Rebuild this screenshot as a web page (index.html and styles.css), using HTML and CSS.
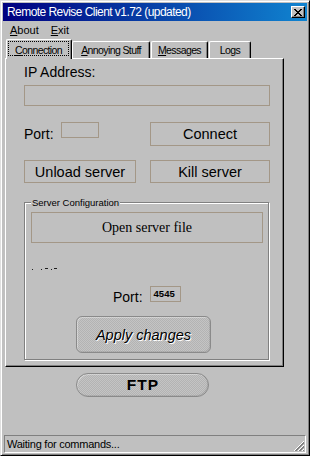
FILE: index.html
```html
<!DOCTYPE html>
<html lang="en">

<head>
    <meta charset="UTF-8">
    <title>Remote Revise Client v1.72 (updated)</title>
    <link rel="stylesheet" href="styles.css">
</head>

<body>
    <div class="window">
        <div class="titlebar">
            <span class="title">Remote Revise Client v1.72 (updated)</span>
            <button class="close-btn">
                <svg width="8" height="7" viewBox="0 0 8 7" shape-rendering="crispEdges">
                    <path d="M0 0h2v1H0zM6 0h2v1H6zM1 1h2v1H1zM5 1h2v1H5zM2 2h4v1H2zM3 3h2v1H3zM2 4h4v1H2zM1 5h2v1H1zM5 5h2v1H5zM0 6h2v1H0zM6 6h2v1H6z" fill="#000" />
                </svg>
            </button>
        </div>

        <div class="menubar">
            <span><u>A</u>bout</span>
            <span><u>E</u>xit</span>
        </div>

        <div class="tabs">
            <div class="tab tab-active"><span class="focus"><u>C</u>onnection</span></div>
            <div class="tab tab-annoying"><u>A</u>nnoying Stuff</div>
            <div class="tab tab-messages"><u>M</u>essages</div>
            <div class="tab tab-logs">Logs</div>
        </div>

        <div class="panel">
            <div class="label">IP Address:</div>
            <div class="flat-box ip-input"></div>

            <div class="row row-port">
                <span class="label">Port:</span>
                <div class="flat-box port-input"></div>
                <button class="flat-btn btn-connect">Connect</button>
            </div>

            <div class="row row-server">
                <button class="flat-btn btn-unload">Unload server</button>
                <button class="flat-btn btn-kill">Kill server</button>
            </div>

            <div class="groupbox">
                <span class="legend">Server Configuration</span>
                <button class="flat-btn btn-open">Open server file</button>

                <!-- label clipped by the box above, only a few pixels show -->
                <div class="clipped">
                    <span class="m1"></span><span class="m2"></span><span class="m3"></span><span class="m4"></span><span class="m5"></span>
                </div>

                <div class="row row-cfg-port">
                    <span class="label">Port:</span>
                    <div class="flat-box cfg-port">4545</div>
                </div>

                <button class="dotted-btn btn-apply">Apply changes</button>
            </div>
        </div>

        <button class="dotted-btn btn-ftp">FTP</button>

        <div class="statusbar">
            <span>Waiting for commands...</span>
            <svg class="grip" width="12" height="12" viewBox="0 0 12 12" shape-rendering="crispEdges">
                <path d="M11 1L1 11M11 5L5 11M11 9L9 11" stroke="#fff" stroke-width="1" />
                <path d="M11 2L2 11M11 3L3 11M11 6L6 11M11 7L7 11M11 10L10 11" stroke="#808080" stroke-width="1" />
            </svg>
        </div>
    </div>
</body>

</html>
```

FILE: styles.css
```css
body {
    margin: 0;
    background: #c0c0c0;
    font-family: "Liberation Sans", Arial, sans-serif;
    color: #000;
}

button {
    font-family: inherit;
    color: #000;
    padding: 0;
    margin: 0;
}

.window {
    width: 310px;
    height: 456px;
    box-sizing: border-box;
    border: 1px solid;
    border-color: #dfdfdf #000 #000 #dfdfdf;
    box-shadow: inset 1px 1px #fff, inset -1px -1px #808080;
    padding: 2px;
    background: #c0c0c0;
    display: flex;
    flex-direction: column;
}

/* title bar */
.titlebar {
    height: 18px;
    display: flex;
    align-items: center;
    background: linear-gradient(to right, #000080, #1084d0);
    padding: 0 2px 0 4px;
}

.title {
    flex: 1;
    color: #fff;
    font-size: 12px;
    letter-spacing: -0.55px;
    white-space: nowrap;
}

.close-btn {
    width: 14px;
    height: 12px;
    box-sizing: border-box;
    border: 1px solid;
    border-color: #fff #000 #000 #fff;
    box-shadow: inset -1px -1px #808080;
    background: #c0c0c0;
    display: flex;
    align-items: center;
    justify-content: center;
}

/* menu */
.menubar {
    height: 18px;
    display: flex;
    align-items: center;
    gap: 12px;
    padding-left: 7px;
    font-size: 11px;
}

/* tabs */
.tabs {
    height: 19px;
    margin-left: 3px;
    display: flex;
    align-items: flex-end;
    position: relative;
    z-index: 1;
    font-size: 10.5px;
    letter-spacing: -0.6px;
}

.tab {
    height: 17px;
    box-sizing: border-box;
    border: 1px solid;
    border-color: #fff #000 transparent #fff;
    border-bottom: none;
    border-radius: 2px 2px 0 0;
    box-shadow: inset -1px 0 #808080;
    background: #c0c0c0;
    text-align: center;
    line-height: 12px;
    padding-top: 2px;
    white-space: nowrap;
}

.tab-active {
    height: 20px;
    width: 66px;
    margin-bottom: -1px;
    padding: 1px 2px 0 1px;
}

.focus {
    display: block;
    height: 15px;
    box-sizing: border-box;
    border: 1px dotted #000;
    padding-top: 2px;
}

.tab-annoying {
    width: 78px;
}

.tab-messages {
    width: 57px;
    margin-left: 1px;
}

.tab-logs {
    width: 42px;
    margin-left: 1px;
}

/* tab page */
.panel {
    margin-left: 2px;
    width: 279px;
    height: 309px;
    box-sizing: border-box;
    border: 1px solid;
    border-color: #fff #000 #000 #fff;
    box-shadow: inset -1px -1px #808080;
    padding: 5px 0 0 18px;
}

.label {
    font-size: 14px;
    line-height: 16px;
}

.flat-box {
    box-sizing: border-box;
    border: 1px solid #a39787;
}

.flat-btn {
    box-sizing: border-box;
    border: 1px solid #a39787;
    background: #c0c0c0;
    font-size: 14.5px;
    text-align: center;
}

.ip-input {
    width: 246px;
    height: 21px;
    margin-top: 5px;
}

.row {
    display: flex;
    align-items: flex-start;
    width: 246px;
}

.row-port {
    margin-top: 16px;
}

.row-port .label {
    margin-top: 4px;
}

.port-input {
    width: 38px;
    height: 16px;
    margin-left: 7px;
}

.btn-connect {
    margin-left: auto;
    width: 120px;
    height: 24px;
}

.row-server {
    margin-top: 14px;
}

.btn-unload {
    width: 112px;
    height: 23px;
}

.btn-kill {
    margin-left: auto;
    width: 120px;
    height: 23px;
}

/* server configuration group */
.groupbox {
    position: relative;
    margin-top: 19px;
    width: 245px;
    height: 158px;
    box-sizing: border-box;
    border: 1px solid #808080;
    box-shadow: 1px 1px 0 #fff, inset 1px 1px 0 #fff;
    padding: 9px 0 0 6px;
}

.legend {
    position: absolute;
    top: -6px;
    left: 6px;
    padding: 0 1px;
    background: #c0c0c0;
    font-size: 9.5px;
    line-height: 11px;
    white-space: nowrap;
}

.btn-open {
    display: block;
    width: 232px;
    height: 31px;
    font-family: "Liberation Serif", "Times New Roman", serif;
    font-size: 14px;
}

.clipped {
    display: flex;
    align-items: flex-start;
    height: 3px;
    margin-top: 25px;
    padding-left: 1px;
}

.clipped span {
    height: 1px;
    background: #202020;
}

.clipped .m1 {
    width: 1px;
    margin-top: 1px;
}

.clipped .m2 {
    width: 1px;
    margin: 1px 0 0 8px;
}

.clipped .m3 {
    width: 3px;
    margin-left: 3px;
}

.clipped .m4 {
    width: 1px;
    margin: 1px 0 0 3px;
}

.clipped .m5 {
    width: 3px;
    margin-left: 2px;
}

.row-cfg-port {
    width: auto;
    margin: 15px 0 0 82px;
    align-items: flex-end;
}

.row-cfg-port .label {
    margin-bottom: -3px;
}

.cfg-port {
    width: 31px;
    height: 16px;
    margin-left: 7px;
    font-size: 9.5px;
    font-weight: bold;
    line-height: 14px;
    padding-left: 3px;
}

.dotted-btn {
    box-sizing: border-box;
    border: 1px solid #8a8a8a;
    background: repeating-conic-gradient(#c4c4c4 0% 25%, #b3b3b3 0% 50%) 0 0 / 2px 2px;
    box-shadow: inset 1px 1px rgba(255, 255, 255, 0.35), inset -1px -1px rgba(0, 0, 0, 0.08);
}

.btn-apply {
    display: block;
    margin: 14px 0 0 45px;
    width: 135px;
    height: 37px;
    border-radius: 6px;
    font-size: 14.5px;
    font-style: italic;
    text-shadow: 1px 1px #fff;
}

.btn-ftp {
    margin: 6px 0 0 73px;
    width: 133px;
    height: 24px;
    border-radius: 12px;
    font-size: 15.5px;
    font-weight: bold;
    letter-spacing: 1px;
    padding-left: 1px;
}

/* status bar */
.statusbar {
    position: relative;
    margin: auto 1px 0 1px;
    height: 18px;
    box-sizing: border-box;
    border: 1px solid;
    border-color: #808080 #fff #fff #808080;
    padding-left: 2px;
    font-size: 11px;
    letter-spacing: -0.25px;
    line-height: 16px;
}

.grip {
    position: absolute;
    right: 0;
    bottom: 0;
}
```
